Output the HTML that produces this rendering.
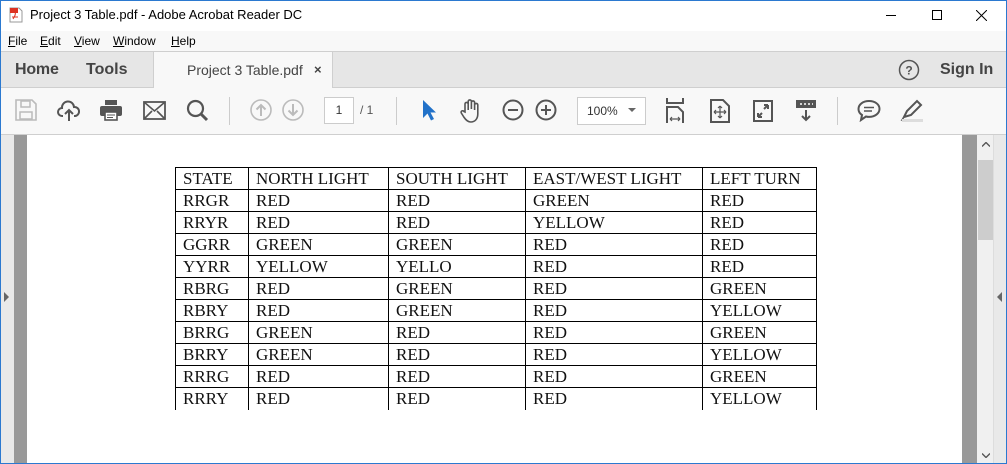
<!DOCTYPE html>
<html><head><meta charset="utf-8"><style>
*{margin:0;padding:0;box-sizing:border-box}
body{width:1007px;height:464px;overflow:hidden;position:relative;font-family:"Segoe UI","Liberation Sans","DejaVu Sans",sans-serif;background:#fff}
.a{position:absolute}
.ui{font-family:"Liberation Sans",sans-serif}
td{border:1px solid #000;font-family:"Liberation Serif",serif;font-size:17px;height:22px;padding:0 0 0 7px;line-height:20px;color:#111;white-space:nowrap}
table{border-collapse:collapse;position:absolute;left:175px;top:167px}
svg{position:absolute}
</style></head><body>
<div class="a" style="left:0;top:0;width:1007px;height:464px;border:1px solid #2b79d0;z-index:9;pointer-events:none"></div>
<div class="a" style="left:0;top:0;width:1007px;height:31px;background:#fff"></div>
<svg style="left:9px;top:7px" width="14" height="16"><path d="M1 1h9l3 3v11H1z" fill="#fff" stroke="#999"/><rect x="1" y="1" width="8" height="5" fill="#d32"/><path d="M4 12c2-3 3-5 2-7M3 10h6" stroke="#d32" fill="none"/></svg>
<div class="a ui" style="left:30px;top:7px;font-size:13px;color:#000">Project 3 Table.pdf - Adobe Acrobat Reader DC</div>
<div class="a" style="left:886px;top:15px;width:10px;height:1px;background:#000"></div>
<div class="a" style="left:932px;top:10px;width:10px;height:10px;border:1px solid #000"></div>
<svg style="left:976px;top:10px" width="11" height="11"><path d="M0 0L11 11M11 0L0 11" stroke="#000"/></svg>
<div class="a ui" style="left:0;top:31px;width:1007px;height:21px;background:#f8f8f8;font-size:12px;color:#000">
<span class="a" style="left:8px;top:3px"><u>F</u>ile</span><span class="a" style="left:40px;top:3px"><u>E</u>dit</span><span class="a" style="left:74px;top:3px"><u>V</u>iew</span><span class="a" style="left:113px;top:3px"><u>W</u>indow</span><span class="a" style="left:171px;top:3px"><u>H</u>elp</span></div>
<div class="a" style="left:0;top:51px;width:1007px;height:37px;background:#e6e6e6;border-top:1px solid #cfcfcf;border-bottom:1px solid #cfcfcf"></div>
<div class="a" style="left:153px;top:52px;width:180px;height:36px;background:#f8f8f8;border-left:1px solid #cfcfcf;border-right:1px solid #cfcfcf"></div>
<div class="a ui" style="left:15px;top:61px;font-size:16px;color:#444;font-weight:bold;letter-spacing:-.2px">Home</div>
<div class="a ui" style="left:86px;top:61px;font-size:16px;color:#444;font-weight:bold">Tools</div>
<div class="a ui" style="left:187px;top:62px;font-size:14px;color:#444">Project 3 Table.pdf</div>
<div class="a ui" style="left:314px;top:62px;font-size:13px;color:#444;font-weight:bold">×</div>
<svg style="left:898px;top:59px" width="22" height="22"><circle cx="11" cy="11" r="9.5" fill="none" stroke="#555" stroke-width="1.5"/><text x="11" y="15.5" font-size="12" font-family="Liberation Sans" font-weight="bold" fill="#555" text-anchor="middle">?</text></svg>
<div class="a ui" style="left:940px;top:61px;font-size:16px;color:#444;font-weight:bold">Sign In</div>
<div class="a" style="left:0;top:88px;width:1007px;height:47px;background:#f8f8f8;border-bottom:1px solid #cfcfcf"></div>
<svg style="left:15px;top:99px" width="22" height="22"><path d="M1 1h16l4 4v16H1z" fill="none" stroke="#bbb" stroke-width="1.6"/><rect x="6" y="2" width="9" height="6" fill="none" stroke="#bbb" stroke-width="1.5"/><rect x="5" y="13" width="12" height="7" fill="none" stroke="#bbb" stroke-width="1.5"/></svg>
<svg style="left:57px;top:99px" width="24" height="24"><path d="M6 17H5a4 4 0 010-8 6 6 0 0112-1 4.5 4.5 0 011 9h-1" fill="none" stroke="#555" stroke-width="2"/><path d="M12 22V11M8 15l4-4 4 4" fill="none" stroke="#555" stroke-width="2"/></svg>
<svg style="left:99px;top:98px" width="24" height="24"><rect x="6" y="2" width="12" height="5" fill="#555"/><rect x="1" y="8" width="22" height="10" rx="2" fill="#555"/><rect x="6" y="14" width="12" height="8" fill="#fff" stroke="#555" stroke-width="1.6"/><path d="M8 17h8M8 19.5h6" stroke="#555"/></svg>
<svg style="left:143px;top:101px" width="24" height="20"><rect x="1" y="1" width="21" height="17" fill="none" stroke="#555" stroke-width="1.8"/><path d="M1 1l10.5 9L22 1M1 18l8-8M22 18l-8-8" fill="none" stroke="#555" stroke-width="1.6"/></svg>
<svg style="left:186px;top:99px" width="24" height="24"><circle cx="9.5" cy="9.5" r="7.5" fill="none" stroke="#555" stroke-width="2.2"/><path d="M15 15l6 6" stroke="#555" stroke-width="3"/></svg>
<div class="a" style="left:229px;top:97px;width:1px;height:28px;background:#ccc"></div>
<svg style="left:250px;top:99px" width="22" height="22"><circle cx="11" cy="11" r="10" fill="none" stroke="#bbb" stroke-width="1.6"/><path d="M11 17V6M6.5 10.5L11 6l4.5 4.5" fill="none" stroke="#bbb" stroke-width="2"/></svg>
<svg style="left:282px;top:99px" width="22" height="22"><circle cx="11" cy="11" r="10" fill="none" stroke="#bbb" stroke-width="1.6"/><path d="M11 5v11M6.5 11.5L11 16l4.5-4.5" fill="none" stroke="#bbb" stroke-width="2"/></svg>
<div class="a ui" style="left:324px;top:97px;width:30px;height:27px;background:#fff;border:1px solid #ccc;font-size:12px;text-align:center;line-height:25px;color:#333">1</div>
<div class="a ui" style="left:360px;top:103px;font-size:12px;color:#555">/ 1</div>
<div class="a" style="left:396px;top:97px;width:1px;height:28px;background:#ccc"></div>
<svg style="left:421px;top:99px" width="16" height="24"><path d="M2 1v18l4.5-4.5 3.5 7 3-1.5-3.5-6.5H15z" fill="#2272c9"/></svg>
<svg style="left:459px;top:98px" width="24" height="26"><path d="M6 14V6a1.6 1.6 0 013.2 0v6V3.5a1.6 1.6 0 013.2 0V11V4.5a1.6 1.6 0 013.2 0V12V7a1.6 1.6 0 013.2 0v9c0 5-3 8-7 8-3 0-5-2-7-5l-2.5-4a1.5 1.5 0 012.6-1.5z" fill="none" stroke="#555" stroke-width="1.6"/></svg>
<svg style="left:502px;top:99px" width="22" height="22"><circle cx="11" cy="11" r="9.5" fill="none" stroke="#555" stroke-width="2"/><path d="M6 11h10" stroke="#555" stroke-width="2"/></svg>
<svg style="left:535px;top:99px" width="22" height="22"><circle cx="11" cy="11" r="9.5" fill="none" stroke="#555" stroke-width="2"/><path d="M6 11h10M11 6v10" stroke="#555" stroke-width="2"/></svg>
<div class="a ui" style="left:577px;top:97px;width:69px;height:28px;background:#fff;border:1px solid #ccc;font-size:12px;color:#333;padding:6px 0 0 9px">100%</div>
<svg style="left:628px;top:108px" width="8" height="5"><path d="M0 0h8L4 4z" fill="#666"/></svg>
<svg style="left:666px;top:98px" width="20" height="26"><path d="M1 0v5h16V0" fill="none" stroke="#555" stroke-width="2"/><path d="M1 25V9h11l5 5v11" fill="none" stroke="#555" stroke-width="2"/><path d="M4 21h10M4 21l2-2M4 21l2 2M14 21l-2-2M14 21l-2 2" stroke="#555" stroke-width="1.2"/></svg>
<svg style="left:710px;top:99px" width="20" height="24"><path d="M1 1h12l6 6v16H1z" fill="none" stroke="#555" stroke-width="2"/><path d="M10 7v12M4 13h12M10 7l-2 2M10 7l2 2M10 19l-2-2M10 19l2-2M4 13l2-2M4 13l2 2M16 13l-2-2M16 13l-2 2" stroke="#555" stroke-width="1.2"/></svg>
<svg style="left:753px;top:100px" width="20" height="22"><rect x="1" y="1" width="18" height="20" fill="none" stroke="#555" stroke-width="2"/><path d="M5 17l4-4M5 17v-4M5 17h4M15 5l-4 4M15 5v4M15 5h-4" stroke="#555" stroke-width="2"/></svg>
<svg style="left:795px;top:99px" width="22" height="24"><rect x="1" y="1" width="20" height="8" fill="#555"/><path d="M5 5h2M9 5h2M13 5h2M17 5h1" stroke="#fff" stroke-width="1.5"/><path d="M11 11v10M7 17l4 4 4-4" fill="none" stroke="#555" stroke-width="2"/></svg>
<div class="a" style="left:837px;top:97px;width:1px;height:28px;background:#ccc"></div>
<svg style="left:857px;top:100px" width="24" height="22"><path d="M12 1C6 1 1.5 4.5 1.5 9c0 2.5 1.2 4.5 3.5 6l-1 5 5-3.5c1 .3 2 .4 3 .4 6 0 10.5-3.5 10.5-8S18 1 12 1z" fill="none" stroke="#555" stroke-width="2"/><path d="M7 7.5h10M7 11h8" stroke="#555" stroke-width="1.6"/></svg>
<svg style="left:900px;top:99px" width="24" height="24"><path d="M4 18l3-6L17 2l4 4-10 10z" fill="none" stroke="#555" stroke-width="2"/><path d="M4 18l-2 3h5" stroke="#555" stroke-width="1.5" fill="none"/><rect x="2" y="20" width="21" height="3" fill="#ddd"/></svg>
<div class="a" style="left:0;top:135px;width:14px;height:329px;background:#e9e9e9"></div>
<svg style="left:4px;top:292px" width="5" height="10"><path d="M0 0l5 5-5 5z" fill="#666"/></svg>
<div class="a" style="left:14px;top:135px;width:13px;height:329px;background:#999"></div>
<div class="a" style="left:27px;top:135px;width:935px;height:329px;background:#fff"></div>
<div class="a" style="left:962px;top:135px;width:15px;height:329px;background:#999"></div>
<div class="a" style="left:977px;top:135px;width:17px;height:329px;background:#f0f0f0;border-right:1px solid #ddd"></div>
<svg style="left:982px;top:142px" width="8" height="5"><path d="M0 4.5L4 .5l4 4" fill="none" stroke="#555" stroke-width="1.4"/></svg>
<svg style="left:982px;top:453px" width="8" height="5"><path d="M0 .5L4 4.5l4-4" fill="none" stroke="#555" stroke-width="1.4"/></svg>
<div class="a" style="left:978px;top:160px;width:15px;height:80px;background:#cdcdcd"></div>
<div class="a" style="left:994px;top:135px;width:13px;height:329px;background:#e9e9e9"></div>
<svg style="left:997px;top:292px" width="5" height="10"><path d="M5 0L0 5l5 5z" fill="#666"/></svg>
<table>
<tr><td style="width:73px">STATE</td><td style="width:140px">NORTH LIGHT</td><td style="width:137px">SOUTH LIGHT</td><td style="width:177px">EAST/WEST LIGHT</td><td style="width:114px">LEFT TURN</td></tr>
<tr><td>RRGR</td><td>RED</td><td>RED</td><td>GREEN</td><td>RED</td></tr>
<tr><td>RRYR</td><td>RED</td><td>RED</td><td>YELLOW</td><td>RED</td></tr>
<tr><td>GGRR</td><td>GREEN</td><td>GREEN</td><td>RED</td><td>RED</td></tr>
<tr><td>YYRR</td><td>YELLOW</td><td>YELLO</td><td>RED</td><td>RED</td></tr>
<tr><td>RBRG</td><td>RED</td><td>GREEN</td><td>RED</td><td>GREEN</td></tr>
<tr><td>RBRY</td><td>RED</td><td>GREEN</td><td>RED</td><td>YELLOW</td></tr>
<tr><td>BRRG</td><td>GREEN</td><td>RED</td><td>RED</td><td>GREEN</td></tr>
<tr><td>BRRY</td><td>GREEN</td><td>RED</td><td>RED</td><td>YELLOW</td></tr>
<tr><td>RRRG</td><td>RED</td><td>RED</td><td>RED</td><td>GREEN</td></tr>
<tr><td style="border-bottom:0">RRRY</td><td style="border-bottom:0">RED</td><td style="border-bottom:0">RED</td><td style="border-bottom:0">RED</td><td style="border-bottom:0">YELLOW</td></tr>
</table>
</body></html>
